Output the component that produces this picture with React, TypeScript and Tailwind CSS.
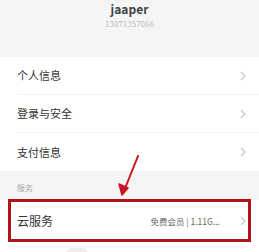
const font = { fontFamily: '"Noto Sans CJK SC", "Noto Sans", sans-serif' };

function Chevron() {
  return (
    <svg width="6" height="10" viewBox="0 0 6 10" className="shrink-0">
      <path d="M1 1l4 4-4 4" fill="none" stroke="#c8c8c8" strokeWidth="1.2" />
    </svg>
  );
}

function Row({ label, last }: { label: string; last?: boolean }) {
  return (
    <div className="flex h-[38px] items-center pl-[17px]">
      <div className={`flex h-full flex-1 items-center justify-between pr-[13px] ${last ? "" : "border-b border-[#f1f1f1]"}`}>
        <span className="text-[11px] text-[#333]">{label}</span>
        <Chevron />
      </div>
    </div>
  );
}

export default function App() {
  return (
    <div style={font} className="h-[252px] w-[259px] overflow-hidden bg-[#f5f5f5]">
      <div className="flex h-[57px] flex-col items-center pt-[1px]">
        <span className="text-[12px] font-bold leading-[15px] text-[#444]">jaaper</span>
        <span className="mt-[3px] text-[8px] leading-[10px] text-[#c0c0c0]">13071357066</span>
      </div>
      <div className="bg-white">
        <Row label="个人信息" />
        <Row label="登录与安全" />
        <Row label="支付信息" last />
      </div>
      <div className="relative h-[29px] pl-[17px] pt-[12px]">
        <p className="text-[8px] leading-[10px] text-[#aaa]">服务</p>
        <svg className="absolute left-[114px] top-[-16px]" width="30" height="44" viewBox="0 0 30 44">
          <path d="M24 1L10 36" stroke="#c8161e" strokeWidth="2" strokeLinecap="round" />
          <path d="M8 40l-3-11 9 4z" fill="#c8161e" stroke="#c8161e" strokeWidth="1.5" strokeLinejoin="round" />
        </svg>
      </div>
      <div className="relative flex h-[42px] items-center justify-between bg-white pl-[17px] pr-[13px]">
        <span className="text-[12px] text-[#333]">云服务</span>
        <div className="flex items-center gap-[20px]">
          <span className="text-[8.5px] text-[#666]">免费会员 | 1.11G...</span>
          <Chevron />
        </div>
        <div className="absolute left-[8px] top-[-1px] h-[43px] w-[243px] border-[3px] border-[#b3121b]" />
      </div>
      <div className="flex h-[10px] bg-white pl-[66px] pt-[6px]">
        <div className="h-[6px] w-[22px] rounded-t-full bg-[#eee]" />
      </div>
    </div>
  );
}
